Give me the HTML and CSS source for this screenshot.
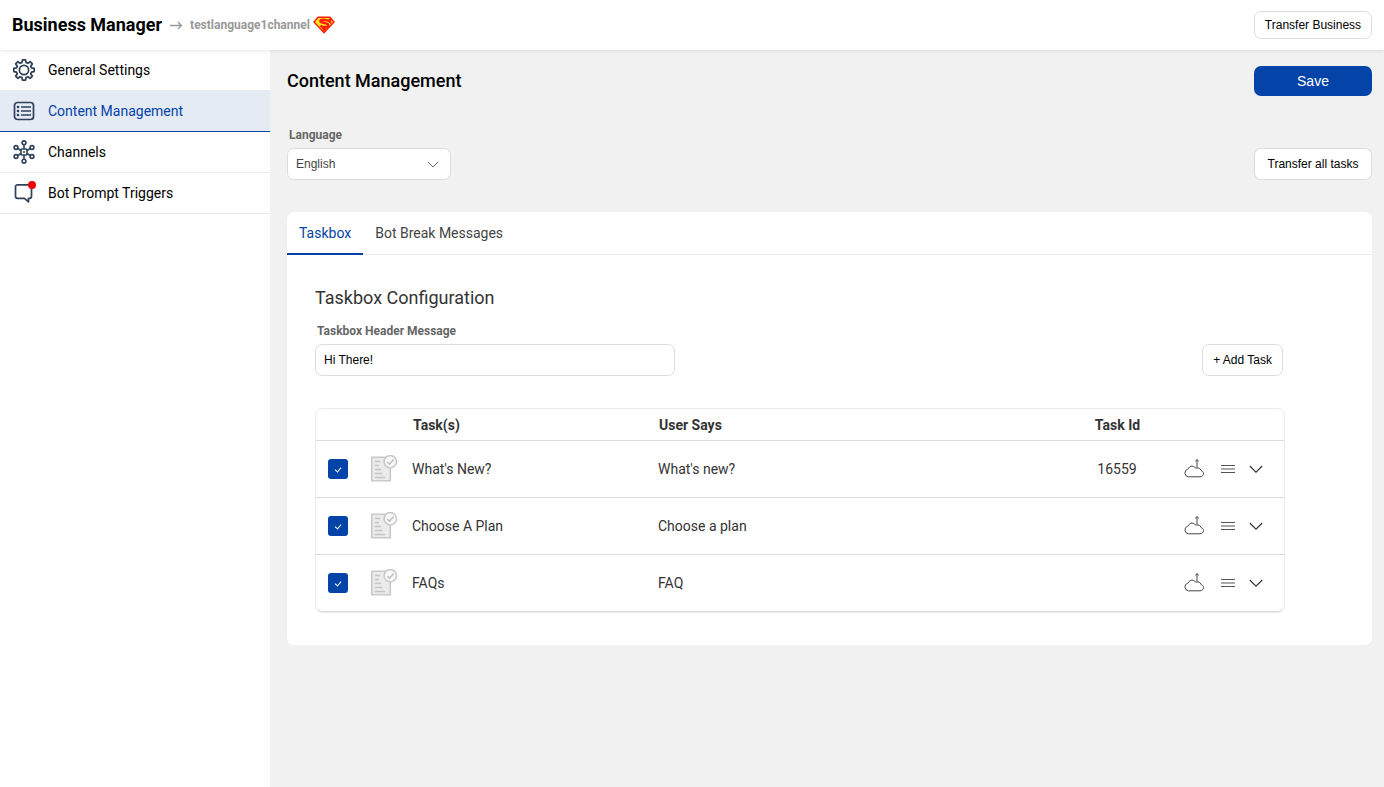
FILE: index.html
```html
<!DOCTYPE html>
<html lang="en">
<head>
<meta charset="utf-8">
<meta name="viewport" content="width=device-width, initial-scale=1">
<title>Business Manager</title>
<link rel="stylesheet" href="styles.css">
</head>
<body>
<svg class="sprite" aria-hidden="true">
  <symbol id="doc" viewBox="0 0 28 28">
    <path d="M1.800 2.300h18.500v23.500H1.800z" fill="#ebebeb" stroke="#c9c9c9" stroke-width="1.600"/>
    <path d="M5 6.500h5M5 10.500h4M5 14.500h6M5 18.500h7.500M5 22.500h10" stroke="#c4c4c4" stroke-width="1.400"/>
    <circle cx="20.300" cy="6.700" r="6.200" fill="#f8f8f8" stroke="#c6c6c6" stroke-width="1.500"/>
    <path d="M17.300 7.100l2.200 2.100 4.100-4.600" fill="none" stroke="#bdbdbd" stroke-width="1.500"/>
  </symbol>
  <symbol id="cloud" viewBox="0 0 20 20">
    <g fill="none" stroke="#444" stroke-width="1" stroke-linejoin="round">
      <path d="M4.300 17.800a3.900 3.900 0 0 1-.6-7.600c.6-.2.800-.6 1.100-1.200.8-1.300 1.900-1.900 3.200-1.900 1.200 0 2.200.5 3 1.400.4.500.9.600 1.500.5 2.200-.4 3.700.5 4.300 2 .2.500.500.800 1 1 1 .4 1.700 1.300 1.700 2.400 0 2-1.500 3.400-3.500 3.400z"/>
      <path d="M13 8.500V.8M11.200 2.300L13 .6l1.800 1.700"/>
    </g>
  </symbol>
  <symbol id="lines" viewBox="0 0 16 16">
    <path d="M1 4.500h14M1 11.500h14" stroke="#555"/><path d="M1 8h14" stroke="#aaa" stroke-width="2"/>
  </symbol>
  <symbol id="chevron" viewBox="0 0 16 16">
    <path d="M1.800 5l6.200 6.200L14.200 5" fill="none" stroke="#333" stroke-width="1.100"/>
  </symbol>
</svg>

<header class="topbar">
  <h1 class="brand">Business Manager</h1>
  <svg class="arrow" viewBox="0 0 14 12" aria-hidden="true"><path d="M1 6.500h11.500M9 3l3.500 3.500L9 10" fill="none" stroke="#999" stroke-width="1.300"/></svg>
  <span class="channel">testlanguage1channel</span>
  <svg class="shield" viewBox="0 0 22 18" aria-hidden="true">
    <path d="M5 1.200h12L21 6 11 16.800 1 6z" fill="#ffe619" stroke="#ff1a0a" stroke-width="1.400"/>
    <path d="M17 2.500v3.200C14.500 3.500 8 3.200 7.300 5.200c-.6 1.800 8 1.300 8 4 0 2.200-4.300 2.800-8 .5" fill="none" stroke="#ff1a0a" stroke-width="2.500"/>
    <path d="M8.500 11.800L11 16l3-3.800z" fill="#ff1a0a"/>
  </svg>
  <button class="btn btn-small" type="button">Transfer Business</button>
</header>

<div class="layout">
  <nav class="sidebar" aria-label="Main">
    <a class="nav-item" href="#general">
      <svg class="nav-icon" viewBox="-1 -1 26 26" aria-hidden="true"><g fill="none" stroke="#2f4156" stroke-width="1.900" stroke-linejoin="round">
        <path d="M10.300 1h3.400l.5 2.900 2 .8L18.600 3 21 5.400l-1.700 2.400.8 2 2.900.5v3.400l-2.900.5-.8 2 1.700 2.400-2.400 2.400-2.400-1.700-2 .8-.5 2.900h-3.400l-.5-2.900-2-.8L5.400 21 3 18.600l1.700-2.400-.8-2-2.900-.5v-3.400l2.900-.5.8-2L3 5.400 5.400 3l2.400 1.700 2-.8z"/>
        <circle cx="12" cy="12" r="5"/></g></svg>
      General Settings</a>
    <a class="nav-item active" href="#content" aria-current="page">
      <svg class="nav-icon" viewBox="0 0 24 24" aria-hidden="true"><g fill="none" stroke="#2f4156" stroke-width="1.700">
        <rect x="2.500" y="3.500" width="19" height="17" rx="3"/><path d="M9 8h10M9 12h10M9 16h10"/></g>
        <g fill="#2f4156"><circle cx="6" cy="8" r="1.300"/><circle cx="6" cy="12" r="1.300"/><circle cx="6" cy="16" r="1.300"/></g></svg>
      Content Management</a>
    <a class="nav-item" href="#channels">
      <svg class="nav-icon" viewBox="0 0 24 24" aria-hidden="true"><g fill="none" stroke="#2f4156" stroke-width="1.600">
        <circle cx="12" cy="2.800" r="1.900"/><circle cx="12" cy="21.200" r="1.900"/><circle cx="4" cy="7.500" r="1.900"/><circle cx="20" cy="7.500" r="1.900"/><circle cx="4" cy="16.500" r="1.900"/><circle cx="20" cy="16.500" r="1.900"/>
        <rect x="9" y="9" width="6" height="6" rx="1"/>
        <path d="M12 4.800V9M12 15v4.200M5.800 8.500l3.200 2M18.200 8.500l-3.200 2M5.800 15.500l3.200-2M18.200 15.500l-3.200-2"/></g><circle cx="12" cy="12" r="1" fill="#2f4156"/></svg>
      Channels</a>
    <a class="nav-item" href="#triggers">
      <svg class="nav-icon" viewBox="0 0 24 24" aria-hidden="true"><path d="M5.500 3.800h12a2 2 0 0 1 2 2v9.500a2 2 0 0 1-2 2h-1v3.500L12.500 17.300h-7a2 2 0 0 1-2-2V5.800a2 2 0 0 1 2-2z" fill="none" stroke="#2f4156" stroke-width="1.700" stroke-linejoin="round"/><circle cx="20" cy="4" r="4" fill="#f00000"/></svg>
      Bot Prompt Triggers</a>
  </nav>

  <main class="main">
    <div class="row">
      <h2 class="page-title">Content Management</h2>
      <button class="btn btn-primary" type="button">Save</button>
    </div>

    <div class="row row-bottom language-row">
      <div class="field">
        <label class="label" for="language">Language</label>
        <div class="select-wrap">
          <select id="language" class="select"><option>English</option></select>
          <svg class="select-icon" viewBox="0 0 12 12" aria-hidden="true"><path d="M1 4l5 5 5-5" fill="none" stroke="#666" stroke-width="1"/></svg>
        </div>
      </div>
      <button class="btn btn-wide" type="button">Transfer all tasks</button>
    </div>

    <section class="card">
      <div class="tabs" role="tablist">
        <button class="tab selected" type="button" role="tab" aria-selected="true">Taskbox</button>
        <button class="tab" type="button" role="tab" aria-selected="false">Bot Break Messages</button>
      </div>
      <div class="panel" role="tabpanel">
        <h3 class="section-title">Taskbox Configuration</h3>
        <div class="row row-bottom message-row">
          <div class="field">
            <label class="label" for="message">Taskbox Header Message</label>
            <input id="message" class="input" type="text" value="Hi There!">
          </div>
          <button class="btn" type="button">+ Add Task</button>
        </div>

        <table class="tasks">
          <colgroup><col class="col-check"><col class="col-icon"><col class="col-task"><col><col class="col-id"><col class="col-actions"></colgroup>
          <thead>
            <tr><th></th><th></th><th>Task(s)</th><th>User Says</th><th class="id">Task Id</th><th></th></tr>
          </thead>
          <tbody>
            <tr>
              <td><input class="check" type="checkbox" aria-label="What's New?" checked></td>
              <td><svg class="doc"><use href="#doc"/></svg></td>
              <td>What's New?</td><td>What's new?</td><td class="id">16559</td>
              <td><div class="actions">
                <button class="icon-btn upload" type="button" aria-label="Transfer"><svg class="icon-cloud"><use href="#cloud"/></svg></button>
                <button class="icon-btn" type="button" aria-label="Reorder"><svg class="icon"><use href="#lines"/></svg></button>
                <button class="icon-btn" type="button" aria-label="Expand"><svg class="icon"><use href="#chevron"/></svg></button>
              </div></td>
            </tr>
            <tr>
              <td><input class="check" type="checkbox" aria-label="Choose A Plan" checked></td>
              <td><svg class="doc"><use href="#doc"/></svg></td>
              <td>Choose A Plan</td><td>Choose a plan</td><td class="id"></td>
              <td><div class="actions">
                <button class="icon-btn upload" type="button" aria-label="Transfer"><svg class="icon-cloud"><use href="#cloud"/></svg></button>
                <button class="icon-btn" type="button" aria-label="Reorder"><svg class="icon"><use href="#lines"/></svg></button>
                <button class="icon-btn" type="button" aria-label="Expand"><svg class="icon"><use href="#chevron"/></svg></button>
              </div></td>
            </tr>
            <tr>
              <td><input class="check" type="checkbox" aria-label="FAQs" checked></td>
              <td><svg class="doc"><use href="#doc"/></svg></td>
              <td>FAQs</td><td>FAQ</td><td class="id"></td>
              <td><div class="actions">
                <button class="icon-btn upload" type="button" aria-label="Transfer"><svg class="icon-cloud"><use href="#cloud"/></svg></button>
                <button class="icon-btn" type="button" aria-label="Reorder"><svg class="icon"><use href="#lines"/></svg></button>
                <button class="icon-btn" type="button" aria-label="Expand"><svg class="icon"><use href="#chevron"/></svg></button>
              </div></td>
            </tr>
          </tbody>
        </table>
      </div>
    </section>
  </main>
</div>
</body>
</html>
```
FILE: styles.css
```css
* { box-sizing: border-box; }

body {
  margin: 0;
  min-height: 100vh;
  display: flex;
  flex-direction: column;
  background: #f1f1f1;
  color: #333;
  font: 14px/20px Roboto, "Liberation Sans", sans-serif;
}

h1, h2, h3 { margin: 0; }
svg { display: block; flex: none; }
.sprite { position: absolute; width: 0; height: 0; }

.topbar {
  display: flex;
  align-items: center;
  min-height: 50px;
  padding: 0 12px;
  background: #fff;
  box-shadow: 0 1px 4px rgba(0, 0, 0, 0.1);
  position: relative;
}
.brand { color: #000; font-size: 18px; line-height: 24px; font-weight: 700; }
.arrow { width: 14px; height: 12px; margin: 0 7px; }
.channel { color: #999; font-size: 12px; font-weight: 700; }
.shield { width: 22px; height: 18px; margin: 0 auto 0 3px; }

.btn {
  height: 32px;
  padding: 0 10px;
  border: 1px solid #dcdcdc;
  border-radius: 7px;
  background: #fff;
  color: #000;
  font: 12px/16px "Liberation Sans", Arial, sans-serif;
}
.btn-small { height: 28px; }
.btn-small, .btn-wide { width: 118px; }
.btn-small { padding: 0; }
.btn-primary {
  width: 118px;
  height: 30px;
  border: 0;
  background: #0443a8;
  color: #fff;
  font-size: 14px;
}

.layout { display: flex; flex: 1; }
.sidebar { width: 270px; flex: none; background: #fff; }
.nav-item {
  display: flex;
  align-items: center;
  gap: 12px;
  height: 41px;
  padding: 0 12px;
  border-bottom: 1px solid #ebebeb;
  color: #000;
  text-decoration: none;
}
.nav-item.active { background: #e5ebf5; border-color: #0443a8; color: #0443a8; }
.nav-icon { width: 24px; height: 24px; }

.main { flex: 1; min-width: 0; padding: 16px 12px 16px 17px; }
.row { display: flex; justify-content: space-between; align-items: center; }
.row-bottom { align-items: flex-end; }
.page-title { color: #000; font-size: 18px; line-height: 24px; font-weight: 500; }
.language-row { margin: 29px 0 32px; }
.message-row { padding-right: 2px; }
.label { display: block; margin: 0 2px 3px; color: #666; font-size: 12px; font-weight: 700; }

.select-wrap { position: relative; width: 164px; }
.select, .input {
  display: block;
  width: 100%;
  height: 32px;
  padding: 0 8px;
  border: 1px solid #dcdcdc;
  border-radius: 7px;
  background: #fff;
  color: #444;
  font: 12px/16px "Liberation Sans", Arial, sans-serif;
  appearance: none;
}
.select-icon { position: absolute; right: 12px; top: 10px; width: 12px; height: 12px; pointer-events: none; }
.input { width: 360px; color: #000; }

.card { border-radius: 7px; background: #fff; overflow: hidden; }
.tabs { display: flex; border-bottom: 1px solid #ebebeb; }
.tab {
  height: 43px;
  margin-bottom: -1px;
  padding: 0 12px;
  border: 0;
  border-bottom: 2px solid transparent;
  background: none;
  color: #444;
  font: 14px/20px Roboto, sans-serif;
}
.tab.selected { border-color: #0443a8; color: #0443a8; }
.panel { padding: 31px 87px 32px 28px; }
.section-title { margin-bottom: 11px; font-size: 18px; line-height: 24px; font-weight: 400; }

.tasks {
  width: 100%;
  margin-top: 32px;
  table-layout: fixed;
  border: 1px solid #ebebeb;
  border-radius: 7px;
  border-spacing: 0;
}
.col-check { width: 42px; }
.col-icon { width: 54px; }
.col-task { width: 246px; }
.col-id { width: 102px; }
.col-actions { width: 116px; }
.tasks th, .tasks td { padding: 0; border-bottom: 1px solid #dcdcdc; text-align: left; }
.tasks th { height: 32px; padding-left: 1px; font-weight: 700; }
.tasks td { height: 57px; }
.tasks .id { text-align: center; }
.tasks tr:last-child td:first-child { border-bottom-left-radius: 6px; }
.tasks tr:last-child td:last-child { border-bottom-right-radius: 6px; }

.check {
  display: grid;
  place-items: center;
  width: 20px;
  height: 20px;
  margin: 0 0 0 12px;
  border-radius: 3px;
  background: #0443a8;
  appearance: none;
}
.check:checked::before {
  content: "";
  width: 3px;
  height: 5px;
  border: solid #fff;
  border-width: 0 1px 1px 0;
  transform: rotate(40deg);
}
.doc { width: 28px; height: 28px; margin-left: 12px; }
.actions { display: flex; align-items: center; gap: 12px; padding-left: 16px; }
.icon-btn { padding: 0; border: 0; background: none; }
.upload { width: 24px; }
.icon-cloud { width: 20px; height: 20px; }
.icon { width: 16px; height: 16px; }
```
